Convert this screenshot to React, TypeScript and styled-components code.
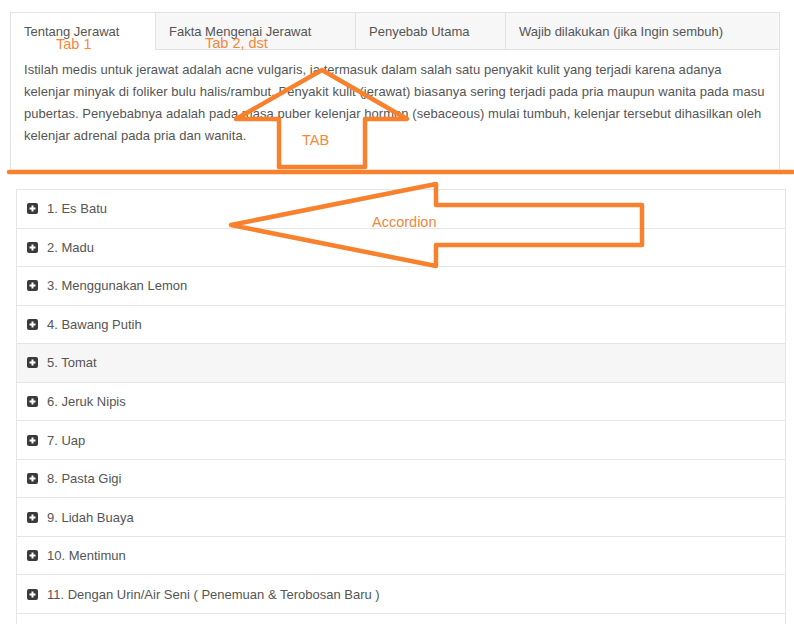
import React from "react";
import styled, { createGlobalStyle } from "styled-components";

const Global = createGlobalStyle`
  html, body { margin: 0; padding: 0; background: #fff; }
  body { font-family: "Liberation Sans", Arial, sans-serif; }
`;

const Page = styled.div`
  position: relative;
  width: 794px;
  height: 624px;
  overflow: hidden;
  padding-top: 12px;
  box-sizing: border-box;
`;

const TabBox = styled.div`
  margin-left: 10px;
  width: 770px;
  height: 162px;
  box-sizing: border-box;
  border: 1px solid #e2e2e2;
  display: flex;
  flex-direction: column;
`;

const TabBar = styled.div`
  display: flex;
  height: 37px;
`;

const Tab = styled.div<{ $w?: number; $active?: boolean }>`
  ${(p) => (p.$w ? `width: ${p.$w}px;` : "flex: 1;")}
  box-sizing: border-box;
  display: flex;
  align-items: center;
  padding-left: 13px;
  font-size: 13px;
  color: #555;
  background: ${(p) => (p.$active ? "#fff" : "#f7f7f7")};
  border-bottom: 1px solid ${(p) => (p.$active ? "transparent" : "#e2e2e2")};
  border-right: 1px solid #e2e2e2;
  &:last-child { border-right: none; }
`;

const Panel = styled.div`
  padding: 9px 13px 0 13px;
  font-size: 13px;
  line-height: 22px;
  color: #555;
  letter-spacing: 0.05px;
  white-space: nowrap;
`;

const Accordion = styled.div`
  margin-top: 15px;
  margin-left: 16px;
  width: 770px;
  box-sizing: border-box;
  border: 1px solid #e6e6e6;
  border-bottom: none;
`;

const Row = styled.div<{ $hover?: boolean }>`
  height: 38.55px;
  box-sizing: border-box;
  display: flex;
  align-items: center;
  gap: 9px;
  padding-left: 10px;
  border-bottom: 1px solid #e6e6e6;
  background: ${(p) => (p.$hover ? "#f6f6f6" : "#fff")};
  font-size: 13px;
  color: #555;
`;

const PlusIcon = () => (
  <svg width="11" height="11" viewBox="0 0 11 11">
    <rect x="0" y="0" width="11" height="11" rx="2" fill="#3a3a3a" />
    <path d="M5.5 2.5v6M2.5 5.5h6" stroke="#fff" strokeWidth="2" />
  </svg>
);

const Overlay = styled.svg`
  position: absolute;
  left: 0;
  top: 0;
  pointer-events: none;
`;

const Note = styled.span<{ $x: number; $y: number }>`
  position: absolute;
  left: ${(p) => p.$x}px;
  top: ${(p) => p.$y}px;
  font-family: "Liberation Sans", Arial, sans-serif;
  font-size: 14.5px;
  line-height: 16px;
  color: #f3883a;
  white-space: nowrap;
`;

const items = [
  "1. Es Batu",
  "2. Madu",
  "3. Menggunakan Lemon",
  "4. Bawang Putih",
  "5. Tomat",
  "6. Jeruk Nipis",
  "7. Uap",
  "8. Pasta Gigi",
  "9. Lidah Buaya",
  "10. Mentimun",
  "11. Dengan Urin/Air Seni ( Penemuan & Terobosan Baru )",
  "",
];

const lines = [
  "Istilah medis untuk jerawat adalah acne vulgaris, ia termasuk dalam salah satu penyakit kulit yang terjadi karena adanya",
  "kelenjar minyak di foliker bulu halis/rambut. Penyakit kulit (jerawat) biasanya sering terjadi pada pria maupun wanita pada masu",
  "pubertas. Penyebabnya adalah pada masa puber kelenjar hormon (sebaceous) mulai tumbuh, kelenjar tersebut dihasilkan oleh",
  "kelenjar adrenal pada pria dan wanita.",
];

export default function App() {
  return (
    <>
      <Global />
      <Page>
        <TabBox>
          <TabBar>
            <Tab $w={145} $active>Tentang Jerawat</Tab>
            <Tab $w={200}>Fakta Mengenai Jerawat</Tab>
            <Tab $w={150}>Penyebab Utama</Tab>
            <Tab>Wajib dilakukan (jika Ingin sembuh)</Tab>
          </TabBar>
          <Panel>
            {lines.map((l, i) => (
              <React.Fragment key={i}>
                {l}
                {i < lines.length - 1 && <br />}
              </React.Fragment>
            ))}
          </Panel>
        </TabBox>
        <Accordion>
          {items.map((t, i) => (
            <Row key={i} $hover={i === 4}>
              {t && <PlusIcon />}
              {t && <span>{t}</span>}
            </Row>
          ))}
        </Accordion>
        <Overlay width="794" height="624" viewBox="0 0 794 624">
          <g fill="none" stroke="#f7812c" strokeWidth="4.5" strokeLinejoin="round">
            <polygon points="322,70 407,119 365,119 365,167 279,167 279,119 236,119" />
            <line x1="9" y1="172" x2="793" y2="172" strokeLinecap="round" />
            <polygon points="231,225 436,184 436,205 642,205 642,245 436,245 436,266" />
          </g>
        </Overlay>
        <Note $x={56} $y={36}>Tab 1</Note>
        <Note $x={205} $y={35}>Tab 2, dst</Note>
        <Note $x={302} $y={132}>TAB</Note>
        <Note $x={372} $y={214}>Accordion</Note>
      </Page>
    </>
  );
}
